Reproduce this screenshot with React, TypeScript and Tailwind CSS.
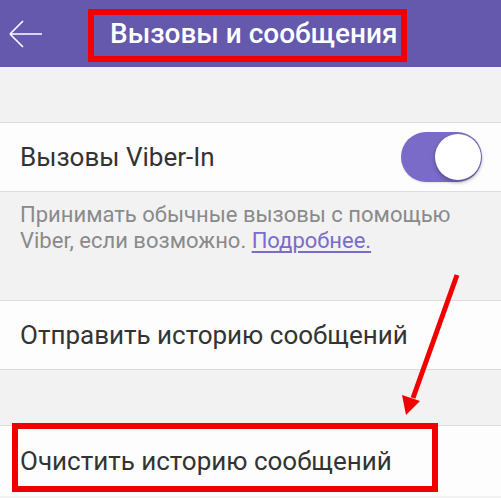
import React from "react";

export default function App() {
  return (
    <div
      className="relative w-[501px] h-[498px] overflow-hidden bg-[#f2f2f2]"
      style={{ fontFamily: "Roboto, Inter, 'Noto Sans', sans-serif" }}
    >
      {/* Header */}
      <div className="h-[67px] bg-[#6459ad] flex items-center">
        <div className="w-[88px] flex items-center pl-[8px]">
          <svg width="36" height="30" viewBox="0 0 36 30" fill="none">
            <path d="M34 15H2M2 15L15 2M2 15L15 28" stroke="white" strokeWidth="1.6" />
          </svg>
        </div>
        <div className="pl-[22px] text-white text-[28px] font-medium">
          Вызовы и сообщения
        </div>
      </div>

      <div className="h-[56px] border-b border-[#dcdcdc]" />

      {/* Viber-In row */}
      <div className="h-[69px] bg-[#fdfdfd] border-b border-[#dcdcdc] flex items-center justify-between pl-[20px] pr-[19px]">
        <span className="text-[#333] text-[26px]">Вызовы Viber-In</span>
        <div className="w-[81px] h-[50px] rounded-full bg-[#7a6bc8] relative shadow-[0_1px_2px_rgba(0,0,0,0.1)]">
          <div className="absolute right-[1px] top-[2px] w-[46px] h-[46px] rounded-full bg-white shadow-[0_2px_4px_rgba(0,0,0,0.3)]" />
        </div>
      </div>

      {/* Description */}
      <div className="h-[109px] border-b border-[#dcdcdc] pl-[20px] pr-[10px] pt-[10px] text-[#8a8a8a] text-[22px] leading-[26px]">
        Принимать обычные вызовы с помощью
        <br />
        Viber, если возможно.{" "}
        <span className="text-[#7b6cc9] underline underline-offset-[3px]">Подробнее.</span>
      </div>

      {/* Send history */}
      <div className="h-[69px] bg-[#fdfdfd] border-b border-[#dcdcdc] flex items-center pl-[20px]">
        <span className="text-[#333] text-[26px]">Отправить историю сообщений</span>
      </div>

      <div className="h-[56px] border-b border-[#dcdcdc]" />

      {/* Clear history */}
      <div className="h-[70px] bg-[#fdfdfd] flex items-center pl-[20px]">
        <span className="text-[#333] text-[26px]">Очистить историю сообщений</span>
      </div>

      {/* Annotations */}
      <div className="absolute left-[88px] top-[9px] w-[319px] h-[53px] border-[6px] border-[#f00000]" />
      <div className="absolute left-[12px] top-[423px] w-[426px] h-[69px] border-[6px] border-[#f00000]" />
      <svg className="absolute left-0 top-0" width="501" height="498" viewBox="0 0 501 498">
        <line x1="457" y1="275" x2="413" y2="398" stroke="#f00000" strokeWidth="5" />
        <polygon points="406,415 402,395 420,401" fill="#f00000" />
      </svg>
    </div>
  );
}
